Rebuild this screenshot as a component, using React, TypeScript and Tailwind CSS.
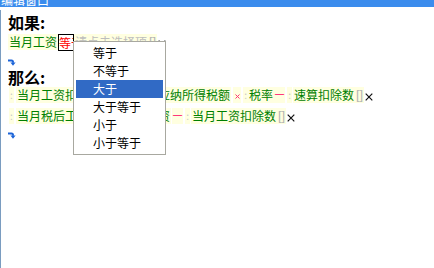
import clsx from 'clsx'

const font = "font-['Noto_Sans_CJK_SC','Noto_Sans',sans-serif]"

function Tok({ children, className }: { children: React.ReactNode; className?: string }) {
  return (
    <span
      className={clsx(
        'flex h-[16px] shrink-0 items-center whitespace-nowrap bg-[#ffffe0] px-[1px] text-[12px] leading-[16px] text-[#008000]',
        className
      )}
    >
      {children}
    </span>
  )
}

function Sep({ className }: { className?: string }) {
  return (
    <span className={clsx('flex h-[16px] w-[5px] shrink-0 items-center justify-center bg-[#ffffe0] text-[10px] leading-[16px] text-[#c8c8c8]', className)}>
      :
    </span>
  )
}

function Minus({ className }: { className?: string }) {
  return (
    <span className={clsx('flex h-[16px] w-[11px] shrink-0 items-center justify-center bg-[#ffffe0] text-[10px] leading-[16px] text-[#ff0066]', className)}>
      一
    </span>
  )
}

function Eq({ className }: { className?: string }) {
  return (
    <span className={clsx('flex h-[16px] w-[11px] shrink-0 items-center justify-center bg-[#ffffe0] text-[12px] leading-[16px] text-[#ff0066]', className)}>
      =
    </span>
  )
}

function Times({ className }: { className?: string }) {
  return (
    <span className={clsx('flex h-[16px] w-[8px] shrink-0 items-center justify-center bg-[#ffffe0]', className)}>
      <svg width="5" height="5" viewBox="0 0 5 5" className="mt-[2px]">
        <path d="M0.5 0.5L4.5 4.5M4.5 0.5L0.5 4.5" stroke="#ff3377" strokeWidth="1" />
      </svg>
    </span>
  )
}

function Bracket({ className }: { className?: string }) {
  return (
    <span className={clsx("flex h-[16px] w-[9px] shrink-0 items-center justify-center bg-[#ffffe0] font-['Liberation_Sans',sans-serif] text-[13px] leading-[16px] text-[#b4b4b4]", className)}>
      []
    </span>
  )
}

function Del({ className }: { className?: string }) {
  return (
    <span className={clsx('flex h-[16px] w-[9px] shrink-0 items-center justify-center', className)}>
      <svg width="8" height="8" viewBox="0 0 8 8" className="mt-[3px]">
        <path d="M0.7 0.7L7.3 7.3M7.3 0.7L0.7 7.3" stroke="#111" strokeWidth="1.2" />
      </svg>
    </span>
  )
}

function Arrow() {
  return (
    <svg width="8" height="7" viewBox="0 0 8 7">
      <path d="M0 1.5H3.5Q5 1.5 5 3V3.8" stroke="#1c64d8" strokeWidth="2" fill="none" />
      <polygon points="2.4,3.6 7.6,3.6 5,6.8" fill="#1c64d8" />
    </svg>
  )
}

const options = ['等于', '不等于', '大于', '大于等于', '小于', '小于等于']

export default function App() {
  return (
    <div className={clsx('relative h-[268px] w-[434px] overflow-hidden bg-white', font)}>
      <div className="h-[7px] overflow-hidden bg-[#3b8ced]">
        <div className="-mt-[6px] pl-[1px] text-[12px] leading-[12px] text-white">编辑窗口</div>
      </div>

      <div className="h-[261px] border-l border-[#7a9cc0] pl-[7px]">
        <div className="mt-[3px] h-[24px] text-[16px] font-bold leading-[24px] text-black">如果:</div>

        <div className="flex h-[17px] items-start">
          <Tok>当月工资</Tok>
          <span className="h-[17px] w-[16px] shrink-0 overflow-hidden whitespace-nowrap border border-black text-[12px] leading-[15px] text-[#ff0000]">
            等于
          </span>
          <Tok className="text-[#bdbdbd]">请点击选择项</Tok>
          <Bracket />
          <Del />
        </div>

        <div className="h-[17px] pt-[8px]">
          <Arrow />
        </div>

        <div className="h-[18px] text-[16px] font-bold leading-[18px] text-black">那么:</div>

        <div className="mt-[1px] flex flex-col gap-[5px]">
          <div className="flex h-[16px] items-start">
            <Sep className="ml-[1px]" />
            <Tok className="ml-[2px]">当月工资扣个人所得税</Tok>
            <Eq className="ml-[1px]" />
            <Sep className="ml-[1px]" />
            <Tok className="ml-[1px]">应纳所得税额</Tok>
            <Times className="ml-[2px]" />
            <Sep className="ml-[2px]" />
            <Tok>税率</Tok>
            <Minus />
            <Sep className="ml-[2px] w-[4px]" />
            <Tok className="ml-[1px]">速算扣除数</Tok>
            <Bracket />
            <Del />
          </div>
          <div className="flex h-[16px] items-start">
            <Sep className="ml-[1px]" />
            <Tok className="ml-[2px]">当月税后工资额</Tok>
            <Eq className="ml-[1px]" />
            <Sep className="ml-[1px]" />
            <Tok className="ml-[1px]">当月工资</Tok>
            <Minus className="ml-[1px]" />
            <Sep className="ml-[2px]" />
            <Tok className="ml-[1px]">当月工资扣除数</Tok>
            <Bracket />
            <Del />
          </div>
        </div>

        <div className="pt-[8px]">
          <Arrow />
        </div>
      </div>

      <ul className="absolute left-[73px] top-[41px] w-[93px] border border-[#a8a8a0] bg-white p-[2px]">
        {options.map((o) => (
          <li
            key={o}
            className={clsx(
              'h-[18px] pl-[17px] text-[12px] leading-[18px]',
              o === '大于' ? 'bg-[#316ac5] text-white' : 'text-black'
            )}
          >
            {o}
          </li>
        ))}
      </ul>
    </div>
  )
}
